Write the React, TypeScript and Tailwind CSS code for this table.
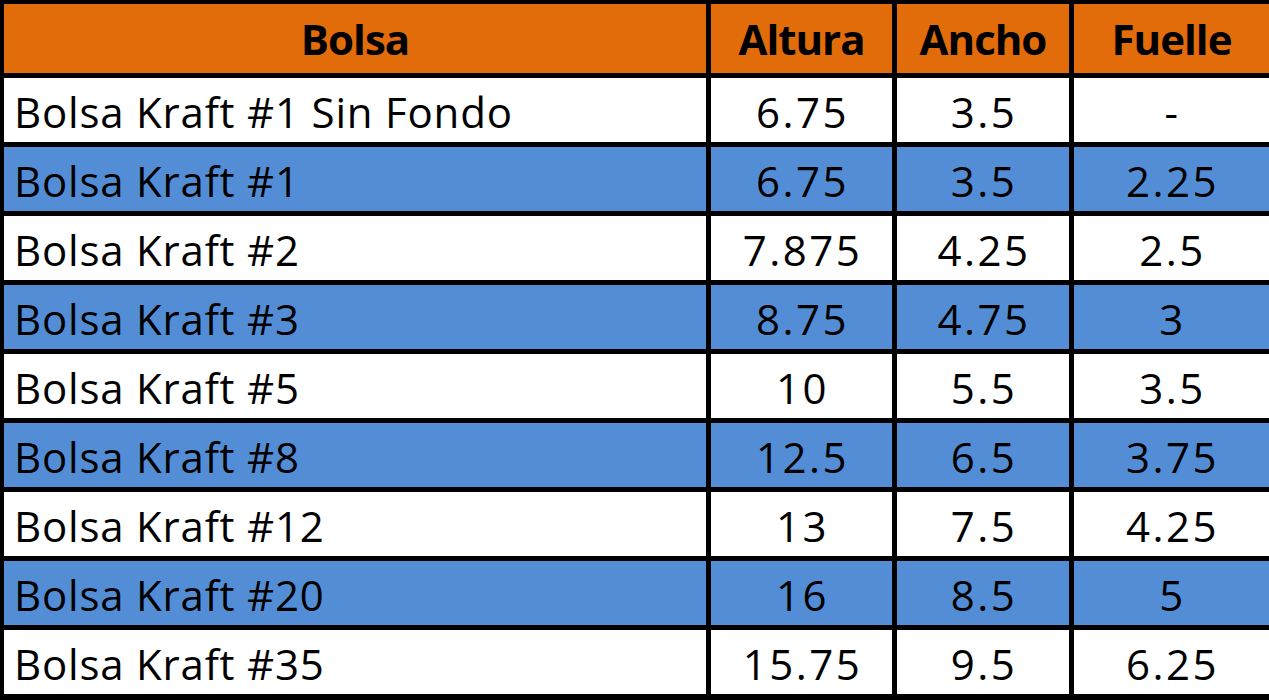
const rows: [string, string, string, string][] = [
  ["Bolsa Kraft #1 Sin Fondo", "6.75", "3.5", "-"],
  ["Bolsa Kraft #1", "6.75", "3.5", "2.25"],
  ["Bolsa Kraft #2", "7.875", "4.25", "2.5"],
  ["Bolsa Kraft #3", "8.75", "4.75", "3"],
  ["Bolsa Kraft #5", "10", "5.5", "3.5"],
  ["Bolsa Kraft #8", "12.5", "6.5", "3.75"],
  ["Bolsa Kraft #12", "13", "7.5", "4.25"],
  ["Bolsa Kraft #20", "16", "8.5", "5"],
  ["Bolsa Kraft #35", "15.75", "9.5", "6.25"],
];

export default function App() {
  return (
    <div
      className="w-[1269px] h-[700px] overflow-hidden bg-black pt-[4px] pl-[4px] text-black"
      style={{ fontFamily: "'Open Sans', Lato, sans-serif" }}
    >
      <div className="grid grid-cols-[702px_181px_172px_1fr] auto-rows-[64px] grid-rows-[69px] gap-x-[5px] gap-y-[5px]">
        {["Bolsa", "Altura", "Ancho", "Fuelle"].map((h) => (
          <div
            key={h}
            className="flex items-center justify-center bg-[#e36c0a] text-[42px] font-bold tracking-[-1px]"
          >
            {h}
          </div>
        ))}
        {rows.map((r, i) => {
          const bg = i % 2 === 1 ? "bg-[#538dd5]" : "bg-white";
          return r.map((cell, j) => (
            <div
              key={`${i}-${j}`}
              className={`flex items-center pt-[3px] text-[42px] ${bg} ${
                j === 0 ? "pl-[10px] tracking-[0.8px]" : "justify-center pl-[2px] tracking-[2.5px]"
              }`}
            >
              {cell}
            </div>
          ));
        })}
      </div>
    </div>
  );
}
